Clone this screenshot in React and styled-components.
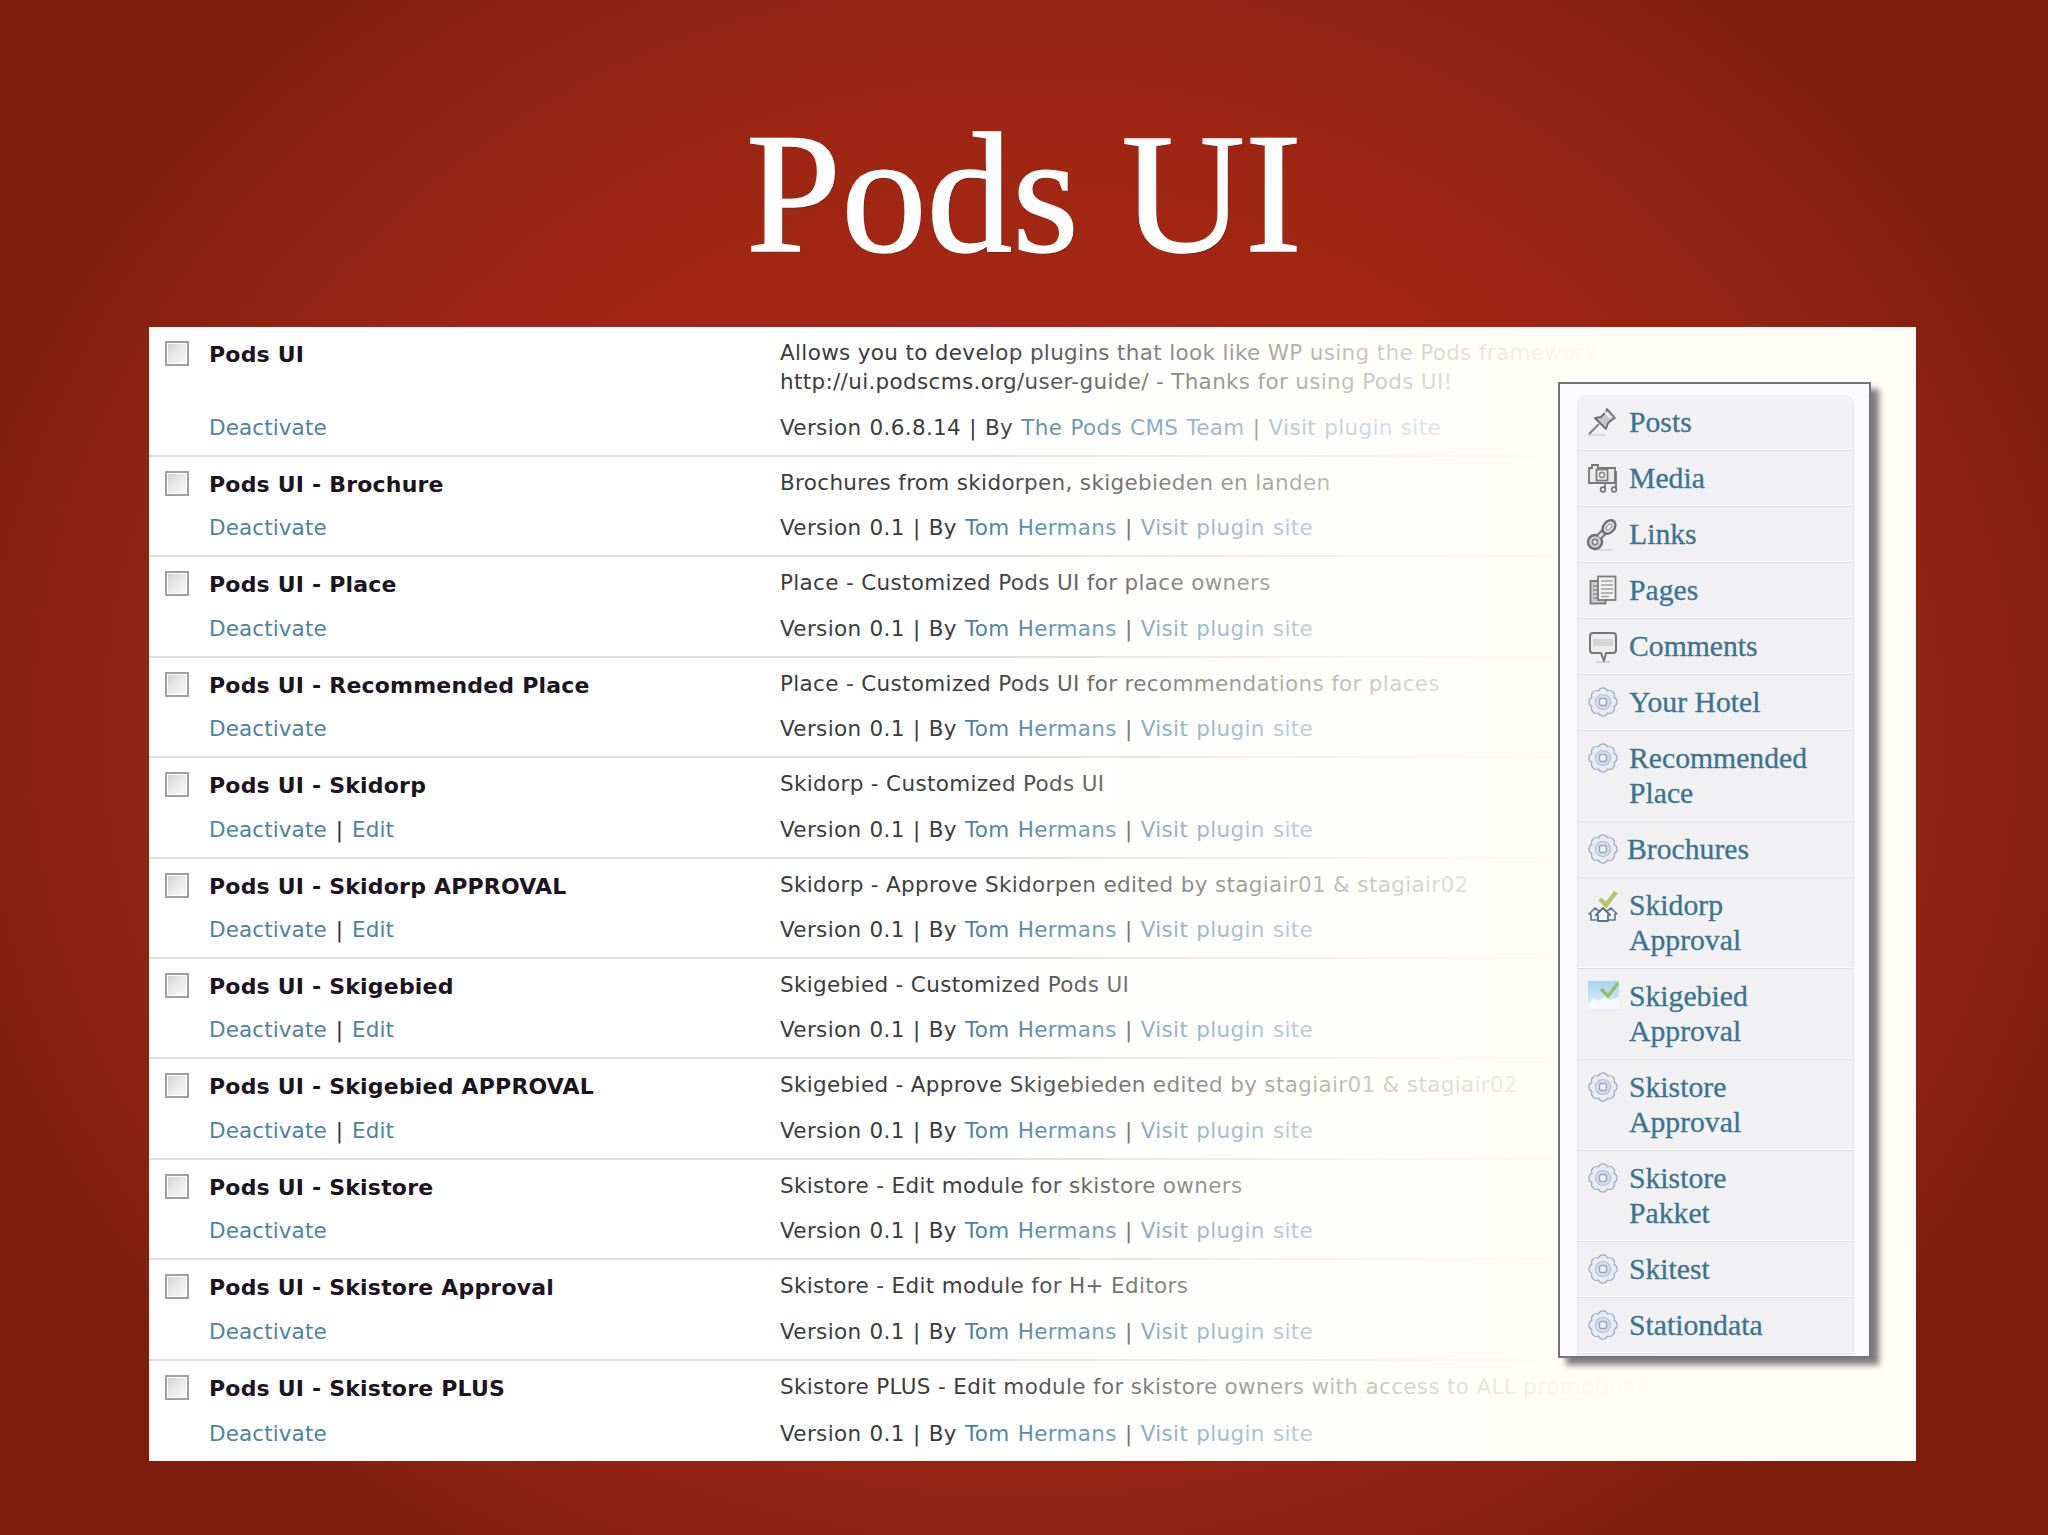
import React from 'react'
import styled, { createGlobalStyle } from 'styled-components';

const GlobalStyle = createGlobalStyle`
    html, body {
        margin: 0;
        padding: 0;
    }
    body {
        width: 2048px;
        min-height: 1535px;
        background: radial-gradient(ellipse 1120px 980px at 50% 48%, #a82814 0%, #a02614 60%, #8e2212 85%, #7d1d0e 100%);
        background-color: #7d1d0e;
    }
`;

const Slide = styled.div`
    width: 2048px;
    height: 1535px;
    overflow: hidden;
`;

const Title = styled.h1`
    box-sizing: border-box;
    height: 327px;
    margin: 0;
    padding-top: 108px;
    text-align: center;
    font-family: "Liberation Serif", serif;
    font-size: 171px;
    line-height: 171px;
    font-weight: 400;
    color: #fff;
    -webkit-text-stroke: 1.5px #fff;
    text-shadow: 1px 1px 1px rgba(60, 10, 0, .6);
`;

const Panel = styled.div`
    position: relative;
    width: 1767px;
    height: 1134px;
    margin-left: 149px;
    background: #fff;
    font-family: "DejaVu Sans", sans-serif;
`;

const Fade = styled.div`
    position: absolute;
    inset: 0;
    pointer-events: none;
    background: linear-gradient(90deg,
        rgba(254,253,248,0) 47%,
        rgba(254,253,248,.4) 58%,
        rgba(254,253,248,.75) 70%,
        rgba(254,253,248,.97) 80%,
        rgba(254,253,248,1) 86%);
`;

const Row = styled.div`
    box-sizing: border-box;
    display: grid;
    grid-template-columns: 60px 571px 1fr;
    height: ${p => p.$first ? '130px' : '100.4px'};
    border-bottom: ${p => p.$last ? 'none' : '2px solid #dedede'};
`;

const Check = styled.div`
    box-sizing: border-box;
    width: 24px;
    height: 25px;
    margin: 14px 0 0 16px;
    border: 2px solid #a0a0a0;
    background: linear-gradient(135deg, #cfcfcf 0%, #e8e8e8 45%, #fafafa 100%);
    box-shadow: inset 0 0 0 1px #fff;
`;

const NameCol = styled.div`
    display: flex;
    flex-direction: column;
    justify-content: space-between;
    padding: 14px 0 13px;
`;

const Name = styled.div`
    font-size: 22px;
    line-height: 28px;
    font-weight: 700;
    letter-spacing: .2px;
    color: #1c1420;
`;

const Actions = styled.div`
    font-size: 21.5px;
    line-height: 28px;
    letter-spacing: .1px;
    word-spacing: 2px;
    color: #333;
`;

const Link = styled.span`
    color: #4d83a0;
`;

const DescCol = styled.div`
    display: flex;
    flex-direction: column;
    justify-content: space-between;
    padding: 11px 0 13px;
    white-space: nowrap;
`;

const Desc = styled.div`
    font-size: 21.5px;
    line-height: 29px;
    letter-spacing: .33px;
    color: #3c3c3c;
`;

const Meta = styled.div`
    font-size: 21.5px;
    line-height: 29px;
    letter-spacing: .33px;
    word-spacing: 1px;
    color: #3c3c3c;
`;

const Menu = styled.div`
    box-sizing: border-box;
    position: absolute;
    left: 1409px;
    top: 55px;
    width: 313px;
    height: 976px;
    padding: 11px 15px 0 17px;
    background: #fbfbfd;
    border: 2px solid #757575;
    box-shadow: 8px 7px 6px rgba(40, 40, 40, .6);
`;

const MenuList = styled.div`
    height: 100%;
    overflow: hidden;
    border-radius: 10px 10px 0 0;
    border-left: 1px solid #e6e6e8;
    border-right: 1px solid #e6e6e8;
    background: #f1f1f3;
`;

const MenuItem = styled.div`
    box-sizing: border-box;
    display: flex;
    align-items: flex-start;
    height: ${p => p.$tall ? '91px' : '56px'};
    padding: 10px 0 0 10px;
    border-bottom: 1px solid #e0e0e2;
    box-shadow: inset 0 -1px 0 #fbfbfc;
    font-family: "Liberation Serif", serif;
    font-size: 29.7px;
    line-height: 35px;
    color: #3b7391;
    -webkit-text-stroke: .3px #3b7391;
`;

const IconBox = styled.div`
    flex: none;
    width: 30px;
    height: 30px;
    margin: 2px ${p => p.$tight ? '9px' : '11px'} 0 0;
`;

const gearPath = () => {
    const n = 8;
    const at = i => {
        const a = (i / n) * Math.PI * 2 + Math.PI / 8;
        return `${(15 + 12 * Math.cos(a)).toFixed(2)} ${(15 + 12 * Math.sin(a)).toFixed(2)}`;
    };
    let d = `M${at(0)}`;
    for (let i = 1; i <= n; i++) {
        d += `A5 5 0 0 1 ${at(i)}`;
    }
    return `${d}Z`;
};

const Gear = () => (
    <svg width="30" height="30" viewBox="0 0 30 30">
        <path d={gearPath()} fill="#e9ebf3" stroke="#a4abc4" strokeWidth="1.2" />
        <circle cx="15" cy="15" r="7.5" fill="#d9deec" stroke="#b4bbd2" strokeWidth="1.2" />
        <rect x="11.5" y="11.5" width="7" height="7" rx="1.5" fill="#eef0f6" stroke="#9aa2be" strokeWidth="1.4" />
    </svg>
);

const Pin = () => (
    <svg width="30" height="30" viewBox="0 0 30 30">
        <path d="M0 28h18" stroke="#cfcfcf" strokeWidth="1.5" />
        <path d="M1 27l10-10" stroke="#7f7f7f" strokeWidth="2" />
        <path d="M7 11l11 11 2-6 5-4 2-1-8-9-1 3-5 5z" fill="#c9c9c9" stroke="#6e6e6e" strokeWidth="1.8" strokeLinejoin="round" />
        <path d="M17 5l6 6" stroke="#f1f1f1" strokeWidth="2.2" />
    </svg>
);

const Media = () => (
    <svg width="30" height="30" viewBox="0 0 30 30">
        <path d="M1 5h3V2h6v3h17v15H1z" fill="#eaeaea" stroke="#777" strokeWidth="1.8" />
        <rect x="8.5" y="6.5" width="11" height="11" fill="#f7f7f7" stroke="#7a7a7a" strokeWidth="1.8" />
        <circle cx="14" cy="12" r="2.6" fill="none" stroke="#8a8a8a" strokeWidth="1.6" />
        <path d="M17 20v6M28 8v18" stroke="#747474" strokeWidth="1.8" />
        <circle cx="15" cy="26.5" r="2.4" fill="none" stroke="#747474" strokeWidth="1.6" />
        <circle cx="26" cy="26.5" r="2.4" fill="none" stroke="#747474" strokeWidth="1.6" />
    </svg>
);

const Chain = () => (
    <svg width="32" height="32" viewBox="0 0 32 32" style={{ marginLeft: -2 }}>
        <path d="M8 31h18" stroke="#d4d4d4" strokeWidth="1.5" />
        <circle cx="9" cy="23" r="7" fill="#cfcfcf" stroke="#707070" strokeWidth="2.4" />
        <circle cx="9" cy="23" r="2.6" fill="#f3f3f3" stroke="#7f7f7f" strokeWidth="1.6" />
        <path d="M13 18l8-8" stroke="#777" strokeWidth="7" />
        <path d="M13 18l8-8" stroke="#e2e2e2" strokeWidth="3" />
        <ellipse cx="23" cy="8" rx="5.5" ry="7.5" transform="rotate(40 23 8)" fill="#e4e4e4" stroke="#707070" strokeWidth="2.4" />
        <ellipse cx="23" cy="8" rx="2" ry="3.5" transform="rotate(40 23 8)" fill="#f7f7f7" stroke="#9a9a9a" strokeWidth="1.2" />
    </svg>
);

const Pages = () => (
    <svg width="30" height="30" viewBox="0 0 30 30">
        <rect x="2.5" y="6" width="15" height="22.5" fill="#cdcdcd" stroke="#767676" strokeWidth="1.8" />
        <path d="M5 11h4M5 15h4M5 19h4M5 23h4" stroke="#8f8f8f" strokeWidth="1.4" />
        <rect x="10" y="1.5" width="17.5" height="23.5" fill="#f2f2f2" stroke="#7b7b7b" strokeWidth="1.8" />
        <path d="M13 6h12M13 10h12M13 14h12M13 18h12M13 21.5h8" stroke="#a0a0a0" strokeWidth="1.6" />
    </svg>
);

const Comment = () => (
    <svg width="30" height="32" viewBox="0 0 30 32">
        <path d="M8 31h14" stroke="#c9c9c9" strokeWidth="1.5" />
        <path d="M5 2h20a3 3 0 0 1 3 3v14a3 3 0 0 1-3 3h-7l-2 8-3-8H5a3 3 0 0 1-3-3V5a3 3 0 0 1 3-3z" fill="#ececec" stroke="#757575" strokeWidth="2" strokeLinejoin="round" />
        <path d="M5 8h20v7H5z" fill="#d4d4d4" />
    </svg>
);

const Houses = () => (
    <svg width="30" height="32" viewBox="0 0 30 32">
        <path d="M12 9l6 6 10-13" fill="none" stroke="#b5c46c" strokeWidth="4.5" />
        <path d="M1 24l6-6 5 4v8H3v-6zM18 22l5-4 6 6h-2v6h-9z" fill="#eef0f5" stroke="#5f7a94" strokeWidth="1.7" strokeLinejoin="round" />
        <path d="M8 25l7-7 7 7h-2v6h-10v-6z" fill="#f4f6fa" stroke="#55728e" strokeWidth="1.8" strokeLinejoin="round" />
    </svg>
);

const Sky = () => (
    <svg width="32" height="32" viewBox="0 0 32 32">
        <defs>
            <linearGradient id="sky" x1="0" y1="0" x2="0" y2="1">
                <stop offset="0" stopColor="#a5d3ef" />
                <stop offset=".6" stopColor="#cfe6f5" />
                <stop offset="1" stopColor="#eef1f4" />
            </linearGradient>
        </defs>
        <rect x="0" y="0" width="31" height="31" fill="url(#sky)" />
        <path d="M0 24l6-7 4 3 6-4 6 3 9-3v12H0z" fill="#f7f9fb" />
        <path d="M13 8l7 7 10-13" fill="none" stroke="#93c063" strokeWidth="3.4" />
    </svg>
);

const plugins = [
    { name: 'Pods UI', desc: ['Allows you to develop plugins that look like WP using the Pods framework', 'http://ui.podscms.org/user-guide/ - Thanks for using Pods UI!'], version: '0.6.8.14', author: 'The Pods CMS Team' },
    { name: 'Pods UI - Brochure', desc: ['Brochures from skidorpen, skigebieden en landen'] },
    { name: 'Pods UI - Place', desc: ['Place - Customized Pods UI for place owners'] },
    { name: 'Pods UI - Recommended Place', desc: ['Place - Customized Pods UI for recommendations for places'] },
    { name: 'Pods UI - Skidorp', desc: ['Skidorp - Customized Pods UI'], edit: true },
    { name: 'Pods UI - Skidorp APPROVAL', desc: ['Skidorp - Approve Skidorpen edited by stagiair01 & stagiair02'], edit: true },
    { name: 'Pods UI - Skigebied', desc: ['Skigebied - Customized Pods UI'], edit: true },
    { name: 'Pods UI - Skigebied APPROVAL', desc: ['Skigebied - Approve Skigebieden edited by stagiair01 & stagiair02'], edit: true },
    { name: 'Pods UI - Skistore', desc: ['Skistore - Edit module for skistore owners'] },
    { name: 'Pods UI - Skistore Approval', desc: ['Skistore - Edit module for H+ Editors'] },
    { name: 'Pods UI - Skistore PLUS', desc: ['Skistore PLUS - Edit module for skistore owners with access to ALL promotions'] },
];

const menu = [
    { label: ['Posts'], icon: <Pin /> },
    { label: ['Media'], icon: <Media /> },
    { label: ['Links'], icon: <Chain /> },
    { label: ['Pages'], icon: <Pages /> },
    { label: ['Comments'], icon: <Comment /> },
    { label: ['Your Hotel'], icon: <Gear /> },
    { label: ['Recommended', 'Place'], icon: <Gear /> },
    { label: ['Brochures'], icon: <Gear />, tight: true },
    { label: ['Skidorp', 'Approval'], icon: <Houses /> },
    { label: ['Skigebied', 'Approval'], icon: <Sky /> },
    { label: ['Skistore', 'Approval'], icon: <Gear /> },
    { label: ['Skistore', 'Pakket'], icon: <Gear /> },
    { label: ['Skitest'], icon: <Gear /> },
    { label: ['Stationdata'], icon: <Gear /> },
];

const App = () => {
    return (
        <Slide>
            <GlobalStyle />
            <Title>Pods UI</Title>
            <Panel>
                {plugins.map((p, i) => (
                    <Row key={p.name} $first={i === 0} $last={i === plugins.length - 1}>
                        <Check />
                        <NameCol>
                            <Name>{p.name}</Name>
                            <Actions>
                                <Link>Deactivate</Link>
                                {p.edit && <> | <Link>Edit</Link></>}
                            </Actions>
                        </NameCol>
                        <DescCol>
                            <Desc>{p.desc.map(line => <div key={line}>{line}</div>)}</Desc>
                            <Meta>
                                Version {p.version || '0.1'} | By <Link>{p.author || 'Tom Hermans'}</Link> | <Link>Visit plugin site</Link>
                            </Meta>
                        </DescCol>
                    </Row>
                ))}
                <Fade />
                <Menu>
                    <MenuList>
                        {menu.map(m => (
                            <MenuItem key={m.label.join()} $tall={m.label.length > 1}>
                                <IconBox $tight={m.tight}>{m.icon}</IconBox>
                                <div>{m.label.map(l => <div key={l}>{l}</div>)}</div>
                            </MenuItem>
                        ))}
                    </MenuList>
                </Menu>
            </Panel>
        </Slide>
    )
}

export default App
